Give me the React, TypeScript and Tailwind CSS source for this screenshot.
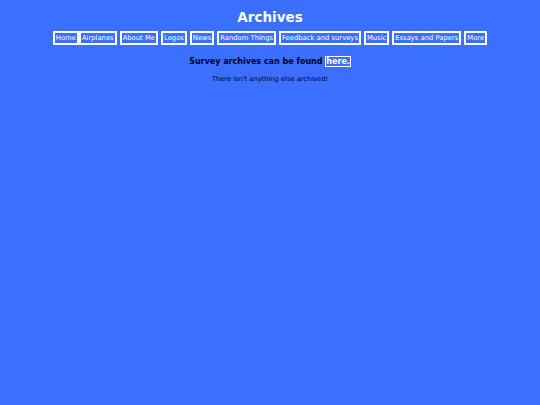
const links = [
  "Home",
  "Airplanes",
  "About Me",
  "Legos",
  "News",
  "Random Things",
  "Feedback and surveys",
  "Music",
  "Essays and Papers",
  "More",
];

export default function App() {
  return (
    <div
      className="min-h-[405px] w-full bg-[#3b6fff] text-black"
      style={{ fontFamily: 'Verdana, "DejaVu Sans", sans-serif' }}
    >
      <div className="flex flex-col items-center pt-[9px]">
        <h1 className="text-[13.5px] font-bold leading-[16px] text-white">Archives</h1>
        <nav className="mt-[6px] flex items-center gap-[3px]">
          {links.map((l, i) => (
            <a
              key={l}
              href="#"
              className={
                "border-2 border-white px-[1px] text-[6.8px] leading-[10px] text-white" +
                (i === 0 ? " -mr-[3px]" : "")
              }
            >
              {l}
            </a>
          ))}
        </nav>
        <p className="mt-[12px] text-[8px] font-bold leading-[10px] text-[#000022]">
          Survey archives can be found{" "}
          <a href="#" className="border border-white text-white">
            here.
          </a>
        </p>
        <p className="mt-[8px] text-[6.7px] leading-[8px] text-[#000022]">
          There isn't anything else archived!
        </p>
      </div>
    </div>
  );
}
